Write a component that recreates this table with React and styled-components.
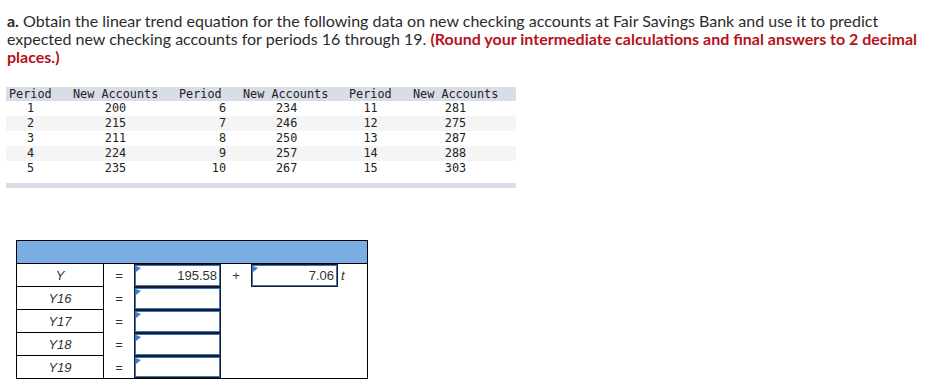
import React from "react";
import styled, { createGlobalStyle } from "styled-components";

const GlobalStyle = createGlobalStyle`
  body {
    margin: 0;
    background: #fff;
  }
`;

const Page = styled.div`
  width: 952px;
  box-sizing: border-box;
  padding: 12px 14px 0 7px;
`;

const Question = styled.p`
  margin: 0;
  font-family: Lato, "Open Sans", sans-serif;
  font-size: 16px;
  line-height: 18px;
  color: #2b2b2b;
  > b {
    font-weight: 700;
  }
  > strong {
    color: #b5121b;
    font-weight: 700;
  }
`;

const DataTable = styled.div`
  margin: 21px 0 0 -1px;
  width: 510px;
  font-family: "DejaVu Sans Mono", "Liberation Mono", monospace;
  font-size: 11.8px;
  color: #222;
`;

const cols = "57px 106px 64px 106px 64px 113px";

const HeadRow = styled.div`
  display: grid;
  grid-template-columns: ${cols};
  height: 14px;
  line-height: 14px;
  background: #d9dde7;
`;

const Row = styled.div`
  display: grid;
  grid-template-columns: ${cols};
  height: 15px;
  line-height: 15px;
  background: ${(p) => (p.$shade ? "#f5f5f5" : "#fff")};
`;

const Cell = styled.div`
  white-space: pre;
  text-align: ${(p) => p.$align || "left"};
  padding-left: ${(p) => p.$pl || 0}px;
  padding-right: ${(p) => p.$pr || 0}px;
`;

const Band = styled.div`
  margin-top: 7px;
  height: 5px;
  background: #d9dde7;
`;

const headPad = [3, 10, 10, 10, 10, 10];
const bodyFmt = [
  { $align: "center", $pl: 3, $pr: 11 },
  { $align: "center", $pl: 10, $pr: 11 },
  { $align: "right", $pl: 10, $pr: 7 },
  { $align: "left", $pl: 43, $pr: 0 },
  { $align: "center", $pl: 10, $pr: 11 },
  { $align: "center", $pl: 10, $pr: 18 },
];

const data = [
  [1, 200, 6, 234, 11, 281],
  [2, 215, 7, 246, 12, 275],
  [3, 211, 8, 250, 13, 287],
  [4, 224, 9, 257, 14, 288],
  [5, 235, 10, 267, 15, 303],
];

const heads = ["Period", "New Accounts", "Period", "New Accounts", "Period", "New Accounts"];

const Answer = styled.div`
  margin: 52px 0 0 9px;
  width: 352px;
  box-sizing: border-box;
  border: 1px solid #000;
  font-family: "Liberation Sans", Arial, sans-serif;
  font-size: 13px;
  color: #333;
`;

const AnswerHead = styled.div`
  height: 22px;
  background: #7aaee5;
  border-bottom: 1px solid #000;
`;

const AnswerGrid = styled.div`
  display: grid;
  grid-template-columns: 87px 30px 87px 30px 87px 29px;
  grid-template-rows: repeat(4, 23px) 22px;
`;

const Label = styled.div`
  grid-column: 1;
  box-sizing: border-box;
  border-right: 1px solid #000;
  border-bottom: ${(p) => (p.$last ? "none" : "1px solid #000")};
  display: flex;
  align-items: center;
  justify-content: center;
  font-style: italic;
`;

const Eq = styled.div`
  grid-column: 2;
  display: flex;
  align-items: center;
  justify-content: center;
`;

const Input = styled.div`
  grid-column: ${(p) => p.$col};
  position: relative;
  box-sizing: border-box;
  border: 1px solid #1c1c1c;
  box-shadow: inset 0 0 0 1px #3a74c4;
  display: flex;
  align-items: center;
  justify-content: flex-end;
  padding-right: 3px;
  &::before {
    content: "";
    position: absolute;
    top: 1px;
    left: 1px;
    border-top: 2px solid transparent;
    border-bottom: 4px solid transparent;
    border-left: 5px solid #3b7bd6;
  }
`;

const Op = styled.div`
  grid-column: ${(p) => p.$col};
  display: flex;
  align-items: center;
  justify-content: ${(p) => p.$justify || "center"};
  padding-left: ${(p) => p.$pl || 0}px;
  font-style: ${(p) => (p.$italic ? "italic" : "normal")};
`;

const labels = ["Y", "Y16", "Y17", "Y18", "Y19"];

const App = () => {
  return (
    <Page>
      <GlobalStyle />
      <Question>
        <b>a.</b> Obtain the linear trend equation for the following data on new checking accounts at
        Fair Savings Bank and use it to predict expected new checking accounts for periods 16 through
        19.{" "}
        <strong>(Round your intermediate calculations and final answers to 2 decimal places.)</strong>
      </Question>

      <DataTable>
        <HeadRow>
          {heads.map((h, i) => (
            <Cell key={i} $pl={headPad[i]}>
              {h}
            </Cell>
          ))}
        </HeadRow>
        {data.map((r, i) => (
          <Row key={i} $shade={i % 2 === 1}>
            {r.map((v, j) => (
              <Cell key={j} {...bodyFmt[j]}>
                {v}
              </Cell>
            ))}
          </Row>
        ))}
        <Band />
      </DataTable>

      <Answer>
        <AnswerHead />
        <AnswerGrid>
          {labels.map((l, i) => (
            <React.Fragment key={l}>
              <Label $last={i === labels.length - 1} style={{ gridRow: i + 1 }}>
                {l}
              </Label>
              <Eq style={{ gridRow: i + 1 }}>=</Eq>
              <Input $col={3} style={{ gridRow: i + 1 }}>
                {i === 0 ? "195.58" : ""}
              </Input>
            </React.Fragment>
          ))}
          <Op $col={4} style={{ gridRow: 1 }}>
            +
          </Op>
          <Input $col={5} style={{ gridRow: 1 }}>
            7.06
          </Input>
          <Op $col={6} $justify="flex-start" $pl={3} $italic style={{ gridRow: 1 }}>
            t
          </Op>
        </AnswerGrid>
      </Answer>
    </Page>
  );
};

export default App;
